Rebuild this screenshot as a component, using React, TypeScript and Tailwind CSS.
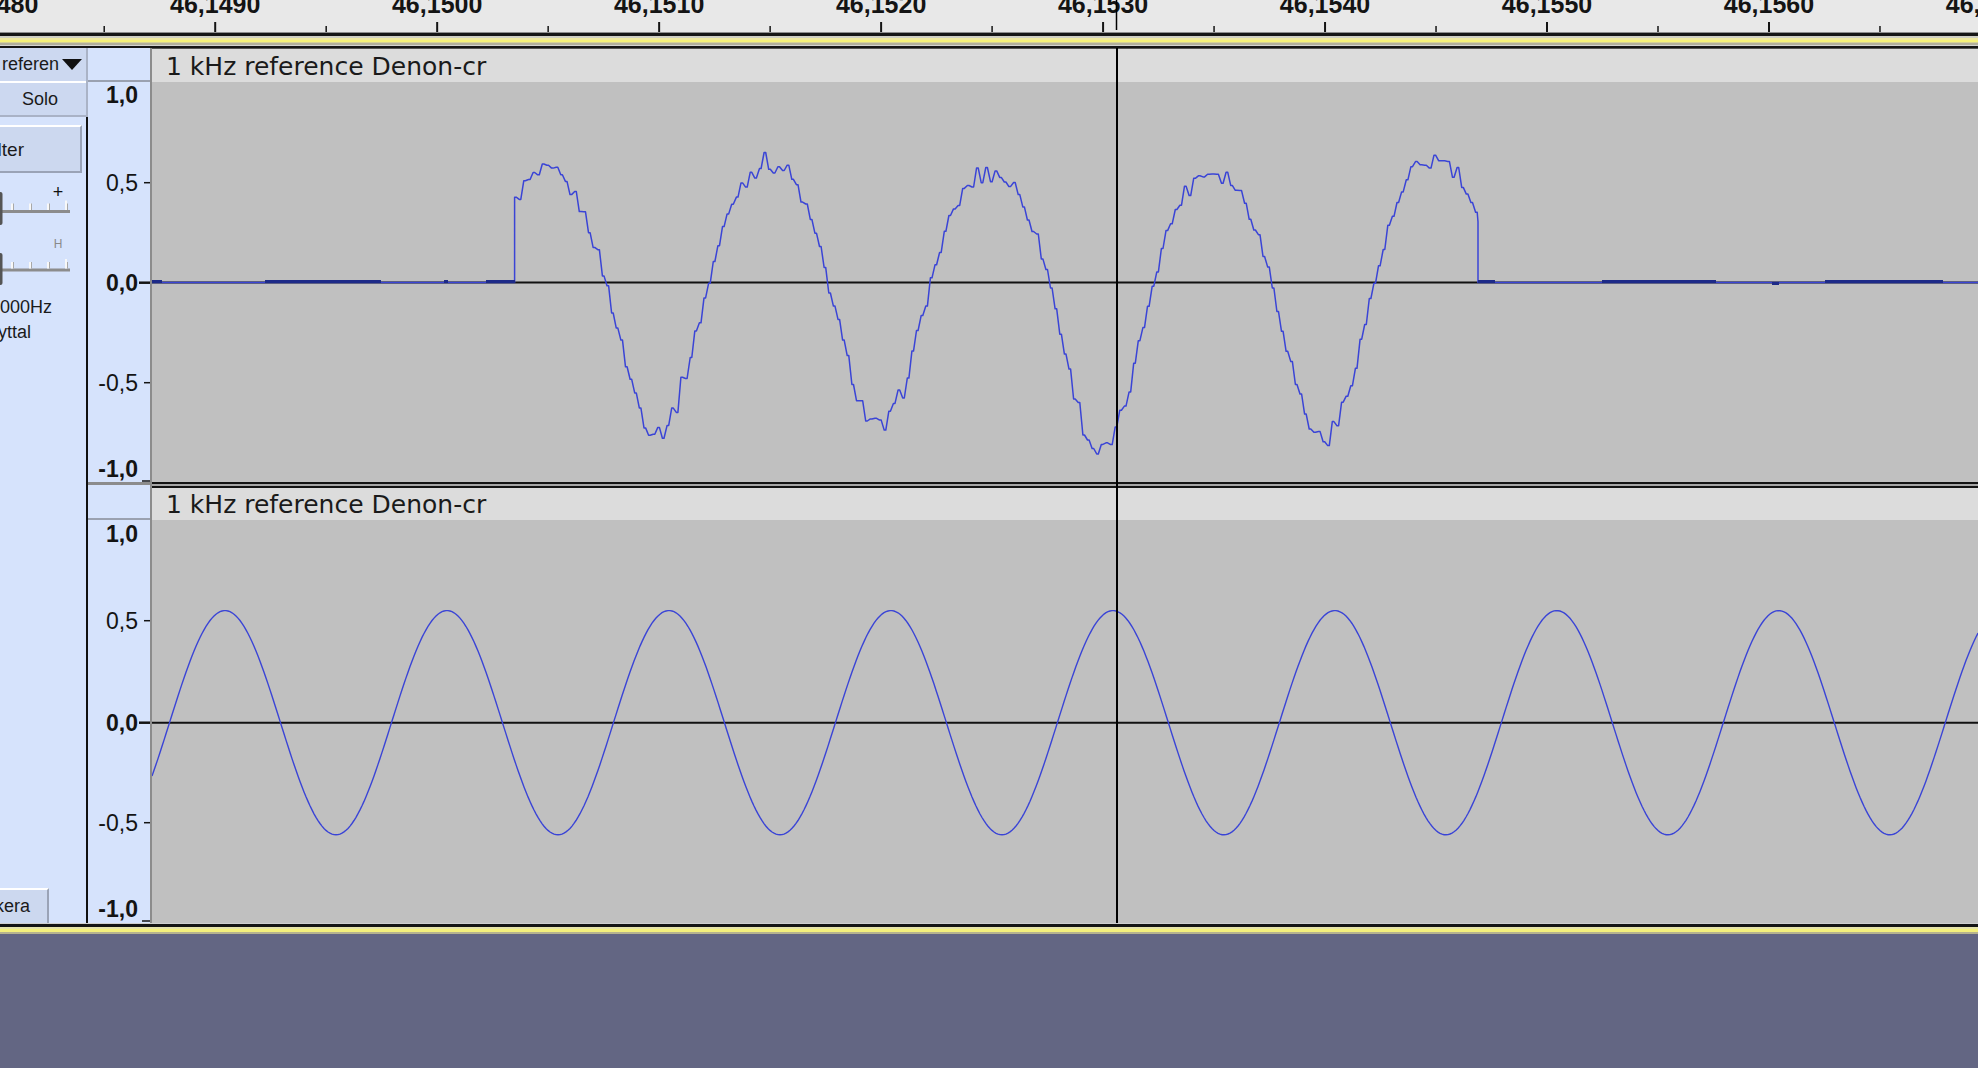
import React from 'react';

const P = 221.97;
const MAJOR0 = 215.2;
const LEFT = 152;
const WAVE_W = 1826;

const rand = (i: number) => {
  const s = Math.sin(i * 127.1 + 311.7) * 43758.5453;
  return s - Math.floor(s);
};

const nearest = (x: number, centers: number[], vals: number[]) => {
  let best = 0;
  for (let i = 1; i < centers.length; i++) {
    if (Math.abs(centers[i] - x) < Math.abs(centers[best] - x)) best = i;
  }
  return vals[best];
};

const track1Path = () => {
  const c = 0.12;
  const zero = 200.5;
  const start = 514.6;
  const end = 1478;
  const posC = [0, 1, 2, 3, 4].map((k) => 605.5 - P / 4 + k * P);
  const negC = [0, 1, 2, 3].map((k) => 605.5 + P / 4 + k * P);
  const posA = [0.54, 0.6, 0.55, 0.56, 0.61];
  const negA = [0.74, 0.73, 0.85, 0.78];
  const f = (x: number, i: number) => {
    const th = Math.PI + c + (2 * Math.PI * (x - 605.5)) / P;
    const b = Math.sin(th) + c * Math.cos(2 * th);
    const v = b > 0 ? (b / (1 - c)) * nearest(x, posC, posA) : (b / (1 + c)) * nearest(x, negC, negA);
    const peak = Math.abs(b) > 0.75 ? 1.6 : 1;
    const n = (rand(i) - 0.5) * 0.07 * peak;
    return zero - (v + n) * 200;
  };
  const d: string[] = [`M0 ${zero}`, `L${start - LEFT} ${zero}`];
  let i = 0;
  for (let x = start; x < end; x += 4.62) {
    const y = f(x, i);
    // sample-and-hold look: short flat step then move to the next sample
    d.push(`L${(x - LEFT).toFixed(1)} ${y.toFixed(1)}`);
    d.push(`L${(x - LEFT + 1.6).toFixed(1)} ${y.toFixed(1)}`);
    i++;
  }
  d.push(`L${end - LEFT} ${f(end, i).toFixed(1)}`);
  d.push(`L${end - LEFT} ${zero}`);
  d.push(`L${WAVE_W} ${zero}`);
  return d.join(' ');
};

const track2Path = () => {
  const d: string[] = [];
  for (let x = 0; x <= WAVE_W; x += 2) {
    const y = 202.7 - 0.555 * 202 * Math.cos((2 * Math.PI * (x + LEFT - 225)) / P);
    d.push(`${x === 0 ? 'M' : 'L'}${x} ${y.toFixed(1)}`);
  }
  return d.join(' ');
};

const silence: [number, number, number][] = [
  [152, 162, 0],
  [265, 381, 0],
  [444, 448, 0],
  [486, 515, 0],
  [1478, 1495, 0],
  [1602, 1716, 0],
  [1772, 1779, 2],
  [1825, 1943, 0],
];

const TimeRuler = () => {
  const majors = Array.from({ length: 10 }, (_, i) => i - 1);
  return (
    <div className="h-[32px] bg-[#e8e8e8]">
      <svg width={1978} height={32} className="block">
        {majors.map((k) => {
          const x = MAJOR0 + k * P;
          return (
            <g key={k}>
              <line x1={x} x2={x} y1={22} y2={32} stroke="#141414" strokeWidth={2} />
              <line x1={x + P / 2} x2={x + P / 2} y1={26} y2={32} stroke="#141414" strokeWidth={1.5} />
              <text x={x} y={13} textAnchor="middle" fontSize={25} fontWeight={700} fill="#141414">
                {`46,${1490 + k * 10}`}
              </text>
            </g>
          );
        })}
        <line x1={1116.5} x2={1116.5} y1={0} y2={30} stroke="#000" strokeWidth={1.5} />
      </svg>
    </div>
  );
};

const TopBand = () => (
  <div className="flex h-[16px] flex-col">
    <div className="h-[1px] bg-[#8e8e8e]" />
    <div className="h-[3px] bg-[#161616]" />
    <div className="h-[2px] bg-[#cfcfc4]" />
    <div className="h-[2px] bg-[#efe9a0]" />
    <div className="h-[2px] bg-[#f6f27a]" />
    <div className="h-[1px] bg-[#d6d296]" />
    <div className="h-[2px] bg-[#b2b09c]" />
    <div className="h-[1px] bg-[#d4d4d0]" />
    <div className="h-[2px] bg-[#161616]" />
  </div>
);

const BottomBand = () => (
  <div className="flex h-[11px] flex-col">
    <div className="h-[1px] bg-[#cfcfcf]" />
    <div className="h-[3px] bg-[#141414]" />
    <div className="h-[2px] bg-[#e6e3aa]" />
    <div className="h-[3px] bg-[#f4f07c]" />
    <div className="h-[2px] bg-[#b6b38e]" />
  </div>
);

const Sliders = () => {
  const ticks = [12, 30, 48];
  const slider = (y: number) => (
    <g>
      <line x1={0} x2={70} y1={y} y2={y} stroke="#8c8c8c" strokeWidth={3} />
      {ticks.map((t) => (
        <line key={t} x1={t} x2={t} y1={y - 8} y2={y - 1.5} stroke="#f8f8f8" strokeWidth={2} />
      ))}
      <line x1={66} x2={66} y1={y - 11} y2={y - 1.5} stroke="#f8f8f8" strokeWidth={2} />
      {[...ticks, 66].map((t) => (
        <line key={`s${t}`} x1={t + 1.5} x2={t + 1.5} y1={y - 8} y2={y - 1.5} stroke="#a8a8a8" strokeWidth={1} />
      ))}
    </g>
  );
  return (
    <svg width={86} height={117} className="block">
      <text x={58} y={25} textAnchor="middle" fontSize={18} fill="#111">
        +
      </text>
      {slider(38.5)}
      <rect x={-3} y={19} width={5.5} height={33} rx={2} fill="#555" />
      <text x={58} y={75} textAnchor="middle" fontSize={12} fill="#8a8a8a">
        H
      </text>
      {slider(97)}
      <rect x={-3} y={80} width={5.5} height={32} rx={2} fill="#555" />
    </svg>
  );
};

const TrackControls = () => (
  <div className="flex w-[86px] flex-col overflow-hidden bg-[#d6e3fc] text-[18px] leading-[25px] text-[#1a1a1a]">
    <div className="flex h-[33px] items-center justify-end gap-[3px] overflow-hidden whitespace-nowrap bg-[#ccd8f0] pr-[4px]">
      <span>1 kHz referen</span>
      <svg width={20} height={11} className="shrink-0">
        <polygon points="0,0 20,0 10,11" fill="#111" />
      </svg>
    </div>
    <div className="flex h-[36px] items-center justify-center border-t-2 border-b-2 border-t-white border-b-[#a9b2c6] bg-[#ccd8f0] pr-[6px]">
      Solo
    </div>
    <div className="mt-[8px] mr-[4px] flex h-[48px] items-center justify-end overflow-hidden whitespace-nowrap border-t-2 border-r-2 border-b-2 border-t-white border-r-[#9aa3b6] border-b-[#9aa3b6] bg-[#ccd8ef] pr-[56px] text-[19px]">
      Filter
    </div>
    <Sliders />
    <div className="mt-[5px] flex justify-end overflow-hidden whitespace-nowrap pr-[34px]">Stereo, 48000Hz</div>
    <div className="flex justify-end overflow-hidden whitespace-nowrap pr-[55px]">32-bitars flyttal</div>
    <div className="flex-1" />
    <div className="mr-[37px] flex h-[35px] items-center justify-end overflow-hidden whitespace-nowrap border-t-2 border-r-2 border-t-white border-r-[#9aa3b6] bg-[#ccd8ef] pr-[17px]">
      Markera
    </div>
  </div>
);

const Scale = ({ h, marks }: { h: number; marks: { y: number; label: string; bold?: boolean; tick: 'none' | 'short' | 'long' | 'under' }[] }) => (
  <svg width={62} height={h} className="block">
    {marks.map((m) => (
      <g key={m.label + m.y}>
        <text
          x={50}
          y={m.y + (m.tick === 'none' || m.tick === 'under' ? 0 : 8.2)}
          textAnchor="end"
          fontSize={23}
          fontWeight={m.bold ? 700 : 400}
          fill="#141414"
        >
          {m.label}
        </text>
        {m.tick === 'short' && <line x1={56} x2={62} y1={m.y} y2={m.y} stroke="#141414" strokeWidth={1.5} />}
        {m.tick === 'long' && <line x1={51} x2={62} y1={m.y} y2={m.y} stroke="#141414" strokeWidth={2.5} />}
        {m.tick === 'under' && <line x1={54} x2={62} y1={m.y + 4} y2={m.y + 4} stroke="#141414" strokeWidth={1.5} />}
      </g>
    ))}
  </svg>
);

const VerticalRuler = () => (
  <div className="flex w-[64px] flex-col border-r-2 border-[#8c8c8c] bg-[#d6e3fc]">
    <div className="h-[34px] border-b-2 border-[#9aa1b0]" />
    <Scale
      h={400}
      marks={[
        { y: 21, label: '1,0', bold: true, tick: 'none' },
        { y: 100.7, label: '0,5', tick: 'short' },
        { y: 200.7, label: '0,0', bold: true, tick: 'long' },
        { y: 300.7, label: '-0,5', tick: 'short' },
        { y: 395, label: '-1,0', bold: true, tick: 'under' },
      ]}
    />
    <div className="h-[6px] border-t-[3px] border-[#8c8c8c]" />
    <div className="h-[32px] border-b-2 border-[#9aa1b0]" />
    <Scale
      h={403}
      marks={[
        { y: 22, label: '1,0', bold: true, tick: 'none' },
        { y: 100.7, label: '0,5', tick: 'short' },
        { y: 202.7, label: '0,0', bold: true, tick: 'long' },
        { y: 302.7, label: '-0,5', tick: 'short' },
        { y: 397, label: '-1,0', bold: true, tick: 'under' },
      ]}
    />
  </div>
);

const TitleBar = ({ first }: { first?: boolean }) => (
  <div
    className={
      first
        ? "h-[34px] border-t border-[#555] bg-[#dcdcdc] pt-[5px] pl-[14px] font-['DejaVu_Sans',sans-serif] text-[25px] leading-[25px] text-[#1a1a1a]"
        : "h-[32px] bg-[#dcdcdc] pt-[4px] pl-[14px] font-['DejaVu_Sans',sans-serif] text-[25px] leading-[25px] text-[#1a1a1a]"
    }
  >
    1 kHz reference Denon-cr
  </div>
);

const Wave1 = () => (
  <div className="h-[400px] bg-[#c0c0c0]">
    <svg width={WAVE_W} height={400} className="block">
      <line x1={0} x2={WAVE_W} y1={200.5} y2={200.5} stroke="#111" strokeWidth={2} />
      <path d={track1Path()} fill="none" stroke="#3a44d6" strokeWidth={1.5} strokeLinejoin="round" />
      {silence.map(([a, b, dy]) => (
        <line key={a} x1={a - LEFT} x2={b - LEFT} y1={199.5 + dy} y2={199.5 + dy} stroke="#1d2a88" strokeWidth={3} />
      ))}
    </svg>
  </div>
);

const Wave2 = () => (
  <div className="h-[403px] bg-[#c0c0c0]">
    <svg width={WAVE_W} height={403} className="block">
      <line x1={0} x2={WAVE_W} y1={202.7} y2={202.7} stroke="#111" strokeWidth={2} />
      <path d={track2Path()} fill="none" stroke="#3a44d6" strokeWidth={1.4} />
    </svg>
  </div>
);

export default function App() {
  return (
    <div className="flex h-[1068px] w-[1978px] flex-col overflow-hidden bg-[#636683] font-['Liberation_Sans',Arial,sans-serif]">
      <TimeRuler />
      <TopBand />
      <div className="flex h-[875px]">
        <TrackControls />
        <div className="flex w-[2px] flex-col">
          <div className="h-[69px] bg-[#aab3c6]" />
          <div className="flex-1 bg-[#111]" />
        </div>
        <VerticalRuler />
        <div className="relative flex flex-1 flex-col">
          <TitleBar first />
          <Wave1 />
          <div className="flex h-[6px] flex-col">
            <div className="h-[2px] bg-[#141414]" />
            <div className="h-[2px] bg-[#a6a6a6]" />
            <div className="h-[2px] bg-[#141414]" />
          </div>
          <TitleBar />
          <Wave2 />
          <div className="absolute top-0 bottom-0 left-[963.5px] w-[2px] bg-black" />
        </div>
      </div>
      <BottomBand />
    </div>
  );
}
